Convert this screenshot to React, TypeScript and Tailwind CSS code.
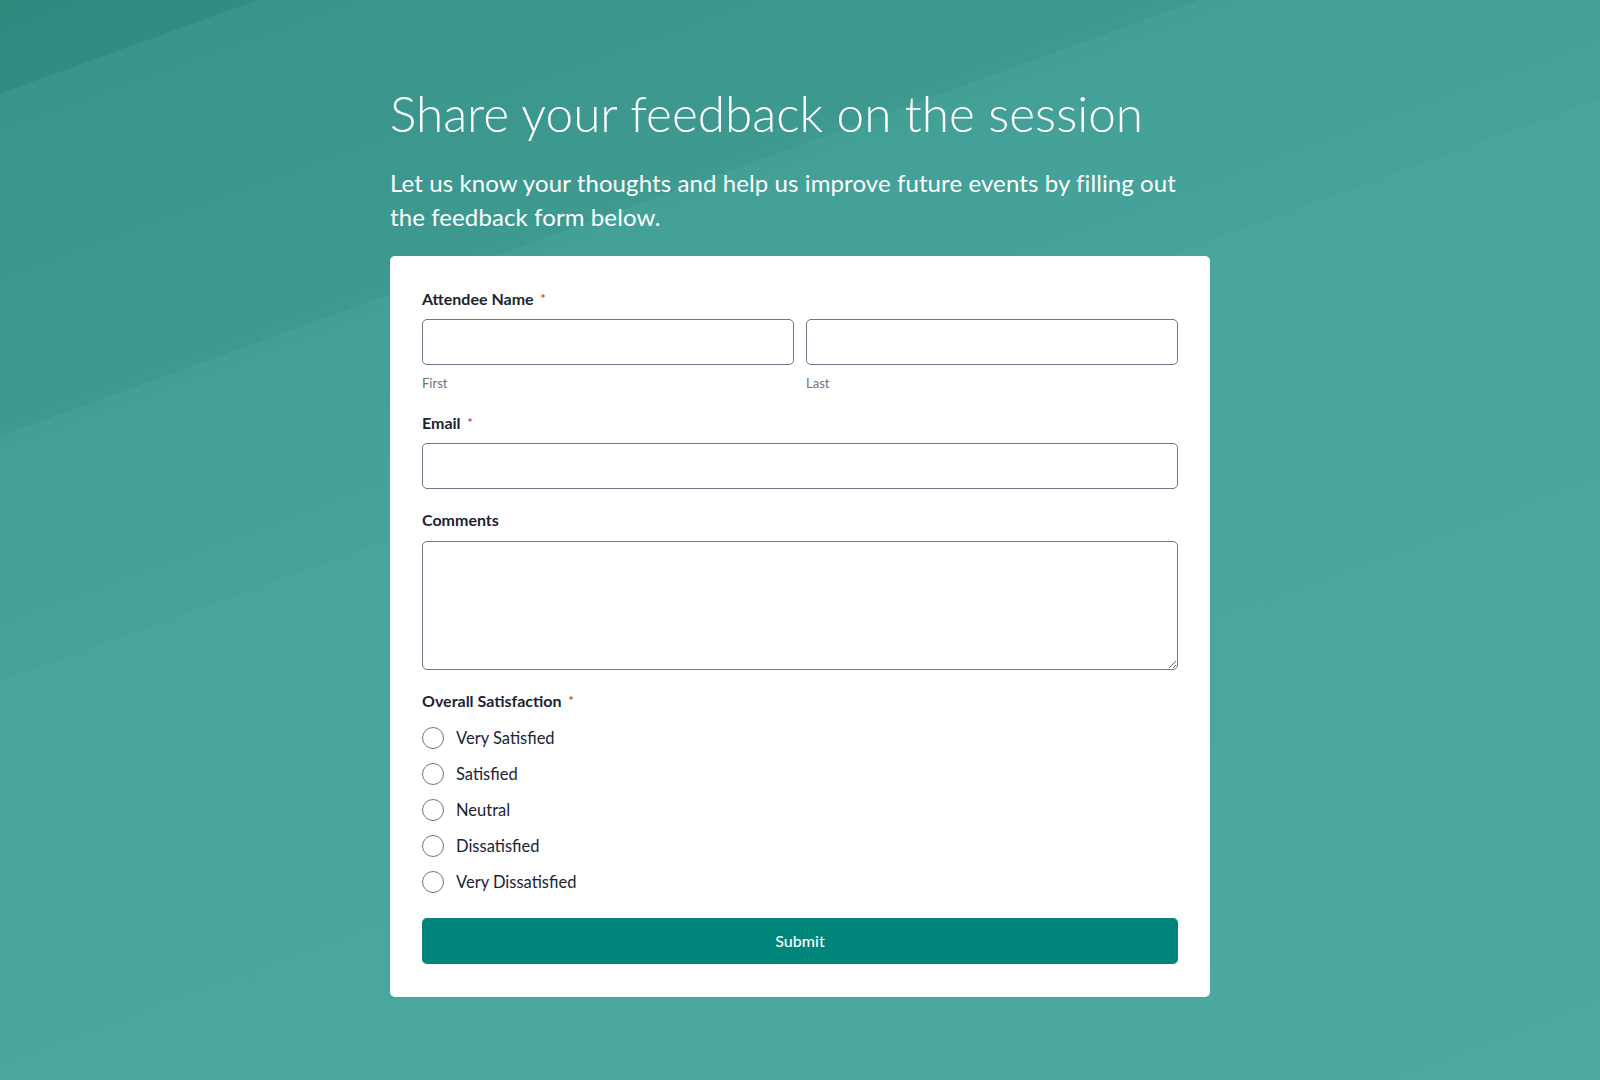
import React from "react";

const options = [
  "Very Satisfied",
  "Satisfied",
  "Neutral",
  "Dissatisfied",
  "Very Dissatisfied",
];

const Required = () => (
  <span className="ml-[7px] text-[12px] text-[#d5361f] align-top">*</span>
);

const FeedbackForm = () => {
  return (
    <div className="min-h-screen w-full font-['Lato',sans-serif] bg-[linear-gradient(160deg,#2e897f_0px,#318c83_88px,#39958c_88px,#3e9a91_410px,#42a097_410px,#46a39b_640px,#48a59d_640px,#4ba9a1_100%)]">
      <div className="mx-auto w-[820px] pt-[85px] pb-[84px]">
        {/* Page header */}
        <h1 className="text-[49.5px] leading-[56px] font-light text-white">
          Share your feedback on the session
        </h1>
        <p className="mt-[25px] text-[24px] leading-[34px] text-white font-normal tracking-[0.1px]">
          Let us know your thoughts and help us improve future events by filling out the feedback
          form below.
        </p>

        {/* Form card */}
        <form className="mt-[22px] bg-white rounded-[5px] px-[32px] pt-[31px] pb-[33px] flex flex-col">
          <label className="text-[16px] leading-[24px] font-bold text-[#1c2434]">
            Attendee Name
            <Required />
          </label>
          <div className="mt-[8px] grid grid-cols-2 gap-[12px]">
            <div className="flex flex-col">
              <input className="h-[46px] rounded-[5px] border border-[#6f7585] outline-none px-3" />
              <span className="mt-[10px] text-[13px] leading-[16px] text-[#6b7280]">First</span>
            </div>
            <div className="flex flex-col">
              <input className="h-[46px] rounded-[5px] border border-[#6f7585] outline-none px-3" />
              <span className="mt-[10px] text-[13px] leading-[16px] text-[#6b7280]">Last</span>
            </div>
          </div>

          <label className="mt-[20px] text-[16px] leading-[24px] font-bold text-[#1c2434]">
            Email
            <Required />
          </label>
          <input className="mt-[8px] h-[46px] rounded-[5px] border border-[#6f7585] outline-none px-3" />

          <label className="mt-[19px] text-[16px] leading-[24px] font-bold text-[#1c2434]">
            Comments
          </label>
          <textarea className="mt-[9px] h-[129px] rounded-[5px] border border-[#6f7585] outline-none px-3 py-2 block" />

          <label className="mt-[19px] text-[16px] leading-[24px] font-bold text-[#1c2434]">
            Overall Satisfaction
            <Required />
          </label>
          <div className="mt-[7px] flex flex-col">
            {options.map((option) => (
              <label key={option} className="h-[36px] flex items-center gap-[12px]">
                <span className="w-[22px] h-[22px] rounded-full border border-[#6f7585] bg-white" />
                <span className="text-[16.5px] text-[#1c2434]">{option}</span>
              </label>
            ))}
          </div>

          <button
            type="button"
            className="mt-[18px] h-[46px] rounded-[5px] bg-[#00857a] text-white text-[16px] font-medium"
          >
            Submit
          </button>
        </form>
      </div>
    </div>
  );
};

export default FeedbackForm;
